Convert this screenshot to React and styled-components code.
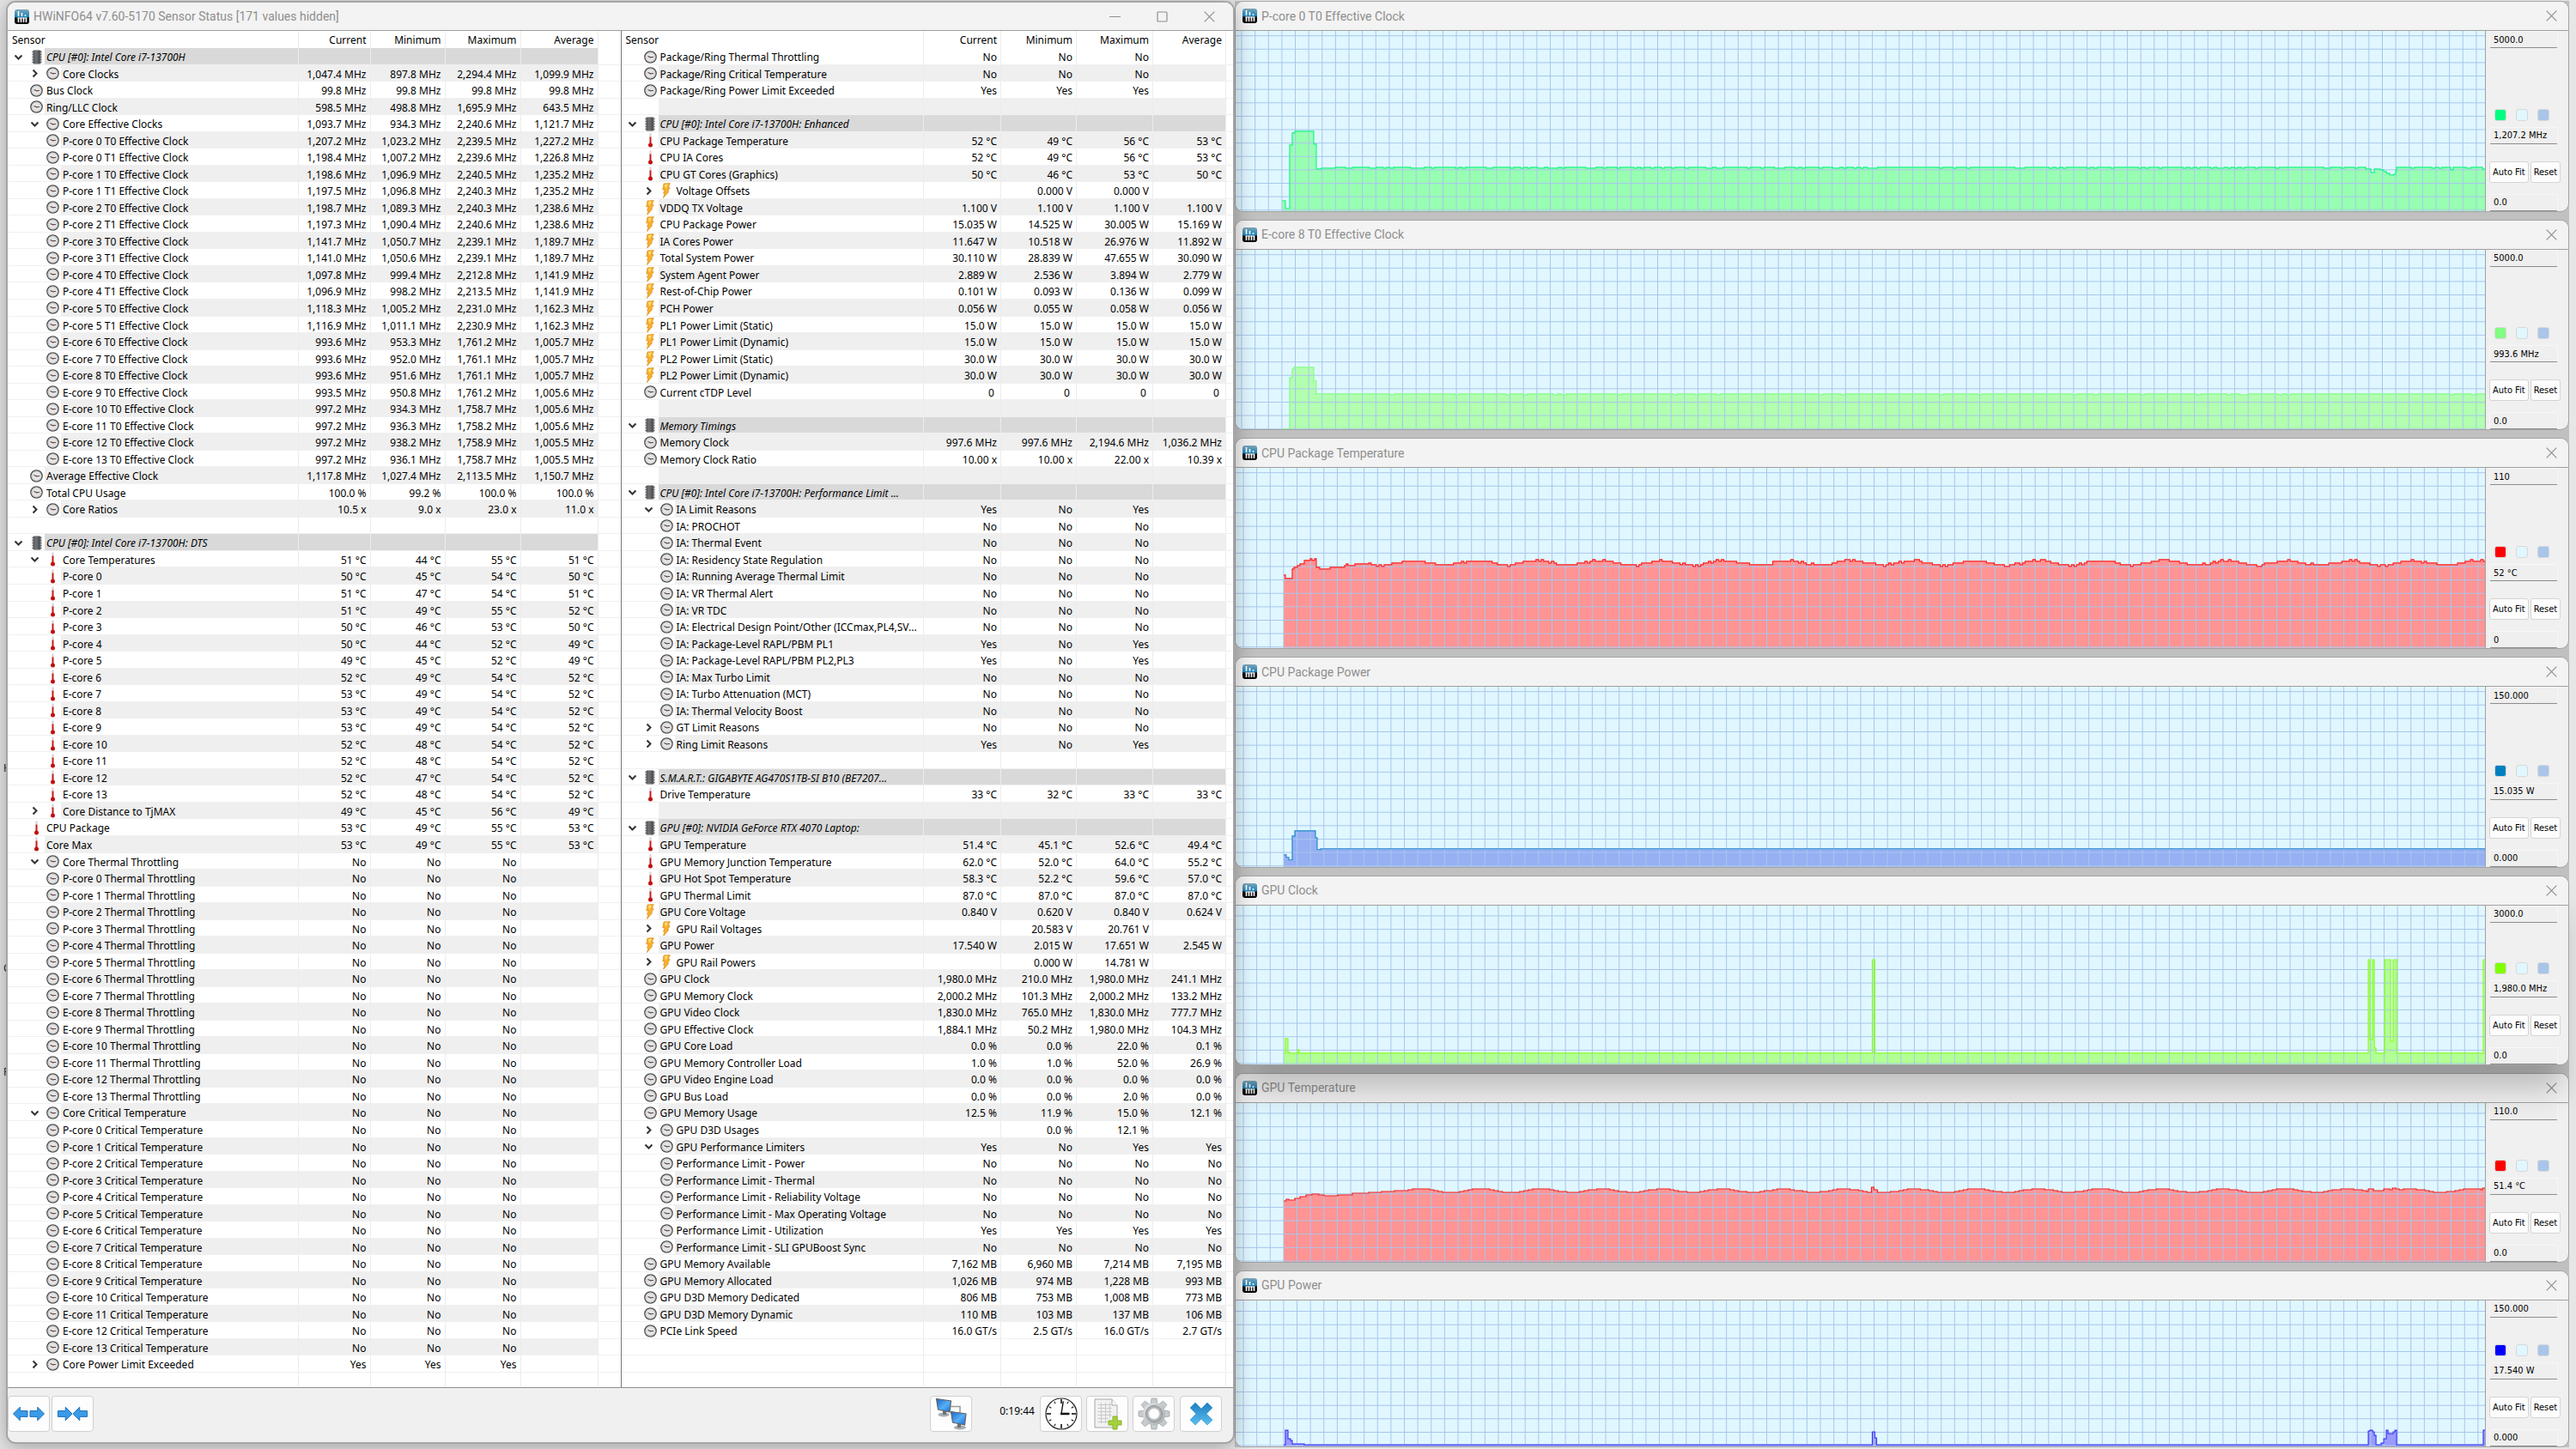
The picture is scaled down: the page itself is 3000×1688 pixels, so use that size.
import styled, { createGlobalStyle, css } from "styled-components";

const GlobalStyle = createGlobalStyle`
  * {
    box-sizing: border-box;
  }
  body {
    margin: 0;
    background: #e6e6e6;
    font-family: "Noto Sans", "Open Sans", sans-serif;
    font-size: 12px;
    color: #000;
  }
  button, input {
    font: inherit;
    color: inherit;
    margin: 0;
  }
`;

const Desktop = styled.div`
  position: relative;
  display: grid;
  grid-template-columns: 1431fr 1554fr;
  height: 100vh;
  min-height: 1500px;
  padding: 1px 8px 2px 7px;
  overflow: hidden;
`;

/* bits of the window that lies behind everything */
const Behind = styled.span`
  position: absolute;
  left: 4px;
  top: ${(p) => p.$top}px;
  line-height: 16px;
  color: #222;
`;

const AppWindow = styled.main`
  position: relative;
  z-index: 2;
  display: flex;
  flex-direction: column;
  min-width: 0;
  margin-bottom: 4px;
  overflow: hidden;
  border: 2px solid #a6a6a6;
  border-radius: 11px;
  background: #f0f0f0;
  box-shadow: 0 4px 24px rgba(0, 0, 0, 0.3);
`;

const TitleBar = styled.header`
  display: flex;
  align-items: center;
  flex: none;
  height: ${(p) => p.$height}px;
  padding-left: 8px;
  background: #f3f3f3;
  border-bottom: 1px solid #a0a0a0;
  svg {
    flex: none;
  }
`;

const Title = styled.h1`
  flex: 1;
  margin: 0 0 0 5px;
  font-family: Roboto, "Open Sans", sans-serif;
  font-size: 14px;
  font-weight: 400;
  line-height: 20px;
  color: #8e8e8e;
  white-space: nowrap;
`;

const WindowButton = styled.button`
  display: flex;
  align-items: center;
  justify-content: center;
  width: ${(p) => (p.$wide ? 55 : 40)}px;
  height: 32px;
  padding: 0;
  border: 0;
  background: none;
  color: #8e8e8e;
`;

const Panes = styled.div`
  display: grid;
  grid-template-columns: 1fr 1fr;
  flex: 1;
  min-height: 0;
  border-bottom: 1px solid #8f8f97;
`;

const SensorTable = styled.table`
  display: flex;
  flex-direction: column;
  min-width: 0;
  background: #fff;
  & + & {
    border-left: 1px solid #777;
  }
  thead {
    flex: none;
  }
  tbody {
    display: flex;
    flex-direction: column;
    flex: 1;
    min-height: 0;
  }
  tr {
    display: grid;
    grid-template-columns: ${(p) => p.$columns};
  }
`;

const HeadRow = styled.tr`
  height: 20px;
  th {
    padding: 0 4px 0 5px;
    border-right: 1px solid #ececec;
    font-weight: 400;
    line-height: 22px;
    text-align: right;
  }
  th:first-child {
    text-align: left;
  }
`;

const tones = { white: "#fff", stripe: "#efefef", group: "#d9d9d9" };

const Row = styled.tr`
  flex: ${(p) => (p.$last ? "0 0 17px" : "1 1 0")};
  min-height: 0;
  overflow: hidden;
  border-bottom: 1px solid ${(p) => (p.$last ? "#fff" : "#f0f0f0")};
  line-height: 21px;
  white-space: nowrap;
  th {
    display: flex;
    min-width: 0;
    padding: 0 0 0 ${(p) => 3 + p.$level * 19}px;
    border-right: 1px solid #ececec;
    font-weight: 400;
    text-align: left;
  }
  td {
    padding: 0 4px 0 5px;
    border-right: 1px solid #ececec;
    background: ${(p) => tones[p.$tone]};
    text-align: right;
  }
`;

const Twisty = styled.button`
  display: flex;
  align-items: center;
  justify-content: center;
  flex: none;
  width: 19px;
  height: 20px;
  margin-right: 2px;
  padding: 0;
  border: 0;
  background: none;
  color: #333;
`;

const NoTwisty = styled.span`
  flex: none;
  width: 21px;
`;

const IconBox = styled.span`
  display: flex;
  align-items: center;
  justify-content: center;
  flex: none;
  width: 19px;
  height: 20px;
`;

const Label = styled.span`
  flex: 1;
  min-width: 0;
  padding-left: 2px;
  overflow: hidden;
  background: ${(p) => tones[p.$tone]};
  ${(p) =>
    p.$tone === "group" &&
    css`
      font-style: italic;
    `}
`;

const Toolbar = styled.footer`
  display: flex;
  align-items: flex-start;
  flex: none;
  height: 63px;
  padding: 9px 13px 0 0;
`;

const ToolButton = styled.button`
  display: flex;
  align-items: center;
  justify-content: center;
  width: 49px;
  height: 42px;
  margin-left: ${(p) => p.$gap || 0}px;
  padding: 0;
  border: 1px solid #d0d0d0;
  border-radius: 4px;
  background: #fdfdfd;
`;

const Elapsed = styled.time`
  padding-left: 32px;
  line-height: 36px;
`;

const Push = styled.div`
  flex: 1;
`;

const Graphs = styled.section`
  display: flex;
  flex-direction: column;
  gap: 9px;
  min-width: 0;
  background: #c0c0c0;
`;

const GraphWindow = styled.article`
  position: relative;
  z-index: ${(p) => (p.$raised ? 1 : 0)};
  display: flex;
  flex-direction: column;
  flex: ${(p) => p.$weight} 1 0;
  min-height: 0;
  border: 1px solid #a3a3a3;
  border-radius: 10px;
  background: #f0f0f0;
  box-shadow: ${(p) => (p.$raised ? "0 38px 36px -8px rgba(0, 0, 0, 0.22)" : "none")};
  header {
    border-radius: 9px 9px 0 0;
  }
`;

const GraphBody = styled.div`
  display: flex;
  flex: 1;
  min-height: 0;
`;

const Plot = styled.div`
  flex: 1;
  min-width: 0;
  overflow: hidden;
  border-right: 1px solid #a0a0a0;
  border-bottom-left-radius: 9px;
  background: #e0f7ff;
  svg {
    display: block;
    width: 100%;
    height: 100%;
  }
`;

const Side = styled.div`
  display: flex;
  flex-direction: column;
  flex: none;
  width: 96px;
  padding-left: 4px;
  font-family: "DejaVu Sans Condensed", "DejaVu Sans", sans-serif;
  font-size: 11px;
`;

const Field = styled.input`
  flex: none;
  width: 80px;
  height: 20px;
  padding: 0 0 0 4px;
  border: 1px solid #f7f7f7;
  border-bottom: 1px solid #8c8c8c;
  border-radius: 2px;
  background: #efefef;
`;

const Swatches = styled.div`
  display: flex;
  gap: 11px;
  margin: auto 0 7px 6px;
`;

const Swatch = styled.button`
  width: 14px;
  height: 14px;
  padding: 0;
  border: 1px solid #d8d8d8;
  border-radius: 3px;
  background: ${(p) => p.$color};
`;

const SideButtons = styled.div`
  display: flex;
  gap: 2px;
  margin: 20px 0 13px;
`;

const SideButton = styled.button`
  height: 25px;
  padding: 0 3px;
  border: 1px solid #d4d4d4;
  border-radius: 3px;
  background: #fdfdfd;
`;

const AppIcon = () => (
  <svg width="17" height="17" viewBox="0 0 17 17" aria-hidden="true">
    <defs>
      <linearGradient id="logoTop" x1="0" y1="0" x2="0" y2="1">
        <stop offset="0" stopColor="#7fa6b8" />
        <stop offset="0.5" stopColor="#1d84ba" />
        <stop offset="0.55" stopColor="#0a3c58" />
        <stop offset="0.6" stopColor="#111" />
        <stop offset="1" stopColor="#000" />
      </linearGradient>
    </defs>
    <rect width="17" height="17" rx="3" fill="url(#logoTop)" />
    <path
      d="M4.500 2v6M8.500 4v4M12.500 6v2M4.500 9.500V15M7.500 9.500V15M10.500 9.500V15M13.500 9.500V15"
      stroke="#fff"
      strokeWidth="1.600"
    />
    <path d="M3.500 10h10.500" stroke="#fff" strokeWidth="1" />
  </svg>
);

const CloseIcon = () => (
  <svg width="13" height="13" viewBox="0 0 13 13" aria-hidden="true">
    <path d="M.7 .7l11.600 11.600M12.300 .7L.7 12.300" stroke="currentColor" strokeWidth="1.200" />
  </svg>
);

const MinimizeIcon = () => (
  <svg width="13" height="13" viewBox="0 0 13 13" aria-hidden="true">
    <path d="M0 6.500h13" stroke="currentColor" />
  </svg>
);

const MaximizeIcon = () => (
  <svg width="13" height="13" viewBox="0 0 13 13" aria-hidden="true">
    <rect x="1" y="1" width="11" height="11" rx="1" fill="none" stroke="currentColor" strokeWidth="1.200" />
  </svg>
);

const Chevron = ({ open }) => (
  <svg width="11" height="11" viewBox="0 0 11 11" fill="none" stroke="currentColor" strokeWidth="2" aria-hidden="true">
    <path d={open ? "M1.500 3.500l4 4 4-4" : "M3.500 1.500l4 4-4 4"} />
  </svg>
);

const sensorIcons = {
  chip: (
    <svg width="14" height="17" viewBox="0 0 14 17" aria-hidden="true">
      <path d="M1 2.500h12M1 5.500h12M1 8.500h12M1 11.500h12M1 14.500h12" stroke="#9a9a9a" strokeWidth="1.500" />
      <rect x="2.500" y=".5" width="9" height="16" rx="1" fill="#55565a" />
      <rect x="4" y="1" width="4" height="15" fill="#6b6c70" />
    </svg>
  ),
  clock: (
    <svg width="15" height="15" viewBox="0 0 15 15" aria-hidden="true">
      <circle cx="7.500" cy="7.500" r="6.700" fill="#e4e4e4" stroke="#4a4a4a" strokeWidth="1.300" />
      <circle cx="7.500" cy="7.500" r="5.400" fill="none" stroke="#bcbcbc" strokeWidth=".8" />
      <path d="M4.500 6.500l3 1.300 3.500-.3" fill="none" stroke="#444" strokeWidth="1.100" />
      <circle cx="7.700" cy="7.800" r=".8" fill="#a33" />
    </svg>
  ),
  temp: (
    <svg width="7" height="17" viewBox="0 0 7 17" aria-hidden="true">
      <rect x="2.300" y=".3" width="2.400" height="13" rx="1.200" fill="#dcd6d6" />
      <rect x="2.600" y="4.500" width="1.800" height="9" fill="#d01515" />
      <circle cx="3.500" cy="14" r="2.500" fill="#c01010" />
    </svg>
  ),
  bolt: (
    <svg width="10" height="18" viewBox="0 0 10 18" aria-hidden="true">
      <path d="M2 1L9.300 .5 7 5.800l2.200-.2L6.300 10.500l1.400-.1L1.500 17.500l1.600-5.600-1.500.2L3.300 7.700.8 8z" fill="#fbb02a" stroke="#d98a1c" strokeWidth=".7" />
      <path d="M3 2l3.800-.3L4.500 7" fill="#ffe27a" />
    </svg>
  ),
};

const Arrow = ({ x, flip }) => (
  <path
    d="M0 9L8 1v4.500h9v7H8V17z"
    transform={flip ? `translate(${x + 17} 0) scale(-1 1)` : `translate(${x} 0)`}
    fill="#3a9be8"
    stroke="#1c6fb8"
  />
);

const ExpandIcon = () => (
  <svg width="37" height="18" viewBox="-.5 0 38 18" aria-hidden="true">
    <Arrow x={0} />
    <Arrow x={20} flip />
  </svg>
);

const CollapseIcon = () => (
  <svg width="35" height="18" viewBox="-.5 0 36 18" aria-hidden="true">
    <Arrow x={0} flip />
    <Arrow x={18} />
  </svg>
);

const NetworkIcon = () => (
  <svg width="38" height="38" viewBox="0 0 38 38" aria-hidden="true">
    <defs>
      <linearGradient id="screen" x1="0" y1="0" x2="1" y2="1">
        <stop offset="0" stopColor="#1a63c4" />
        <stop offset=".55" stopColor="#56b0f8" />
        <stop offset="1" stopColor="#1767cf" />
      </linearGradient>
    </defs>
    <path d="M18 10.500h11V18" fill="none" stroke="#999" strokeWidth="1.500" />
    <ellipse cx="10" cy="20" rx="6.500" ry="2.500" fill="#a9adb0" />
    <path d="M9 14h4v6H9z" fill="#6d7275" />
    <path d="M1.500 1.500l17 2.500-1.500 13-13.500-3z" fill="url(#screen)" stroke="#60666a" strokeWidth="1.200" />
    <ellipse cx="29" cy="35" rx="7" ry="2.500" fill="#a9adb0" />
    <path d="M26 29h4v6h-4z" fill="#6d7275" />
    <path d="M18.500 16.500l17.500 2.500-1.500 13-14-3z" fill="url(#screen)" stroke="#60666a" strokeWidth="1.200" />
  </svg>
);

const ClockFace = () => (
  <svg width="38" height="38" viewBox="0 0 38 38" aria-hidden="true">
    <circle cx="19" cy="19" r="18" fill="#fff" stroke="#222" strokeWidth="1.200" />
    {[...Array(12).keys()].map((i) => (
      <path
        key={i}
        d={i % 3 ? "M19 2.500v3" : "M19 2v5"}
        transform={`rotate(${i * 30} 19 19)`}
        stroke="#111"
        strokeWidth={i % 3 ? 1 : 1.6}
      />
    ))}
    <path d="M19 19l2.300-14.500" stroke="#111" strokeWidth="1.400" />
    <path d="M18 19h10.500" stroke="#111" strokeWidth="2.500" />
  </svg>
);

const LogIcon = () => (
  <svg width="34" height="38" viewBox="0 0 34 38" aria-hidden="true">
    <path d="M2 2h20l6 7v26H2z" fill="#f1f1f1" stroke="#a8a8a8" />
    <path d="M22 2v7h6" fill="#fff" stroke="#a8a8a8" />
    <path d="M5.500 8.500h16M5.500 12.500h16M5.500 16.500h16M5.500 20.500h16M5.500 24.500h12M5.500 28.500h12M9.500 6v24M14.500 6v24M19.500 6v18" stroke="#c9c9c9" fill="none" />
    <path d="M23 22h5v5h5v5h-5v5h-5v-5h-5v-5h5z" fill="#a5d23c" stroke="#86b224" />
  </svg>
);

const GearIcon = () => (
  <svg width="38" height="38" viewBox="0 0 38 38" aria-hidden="true">
    <defs>
      <linearGradient id="steel" x1="0" y1="0" x2="1" y2="1">
        <stop offset="0" stopColor="#e4e7e9" />
        <stop offset="1" stopColor="#a4a9ac" />
      </linearGradient>
    </defs>
    {[...Array(8).keys()].map((i) => (
      <path
        key={i}
        d="M15 8l1-7h6l1 7z"
        transform={`rotate(${i * 45} 19 19)`}
        fill="#c6cbcd"
        stroke="#9a9fa2"
        strokeWidth=".7"
      />
    ))}
    <circle cx="19" cy="19" r="13" fill="url(#steel)" />
    <circle cx="19" cy="19" r="9.500" fill="#aeb3b6" stroke="#8d9194" />
    <circle cx="19" cy="19" r="6.500" fill="#fdfdfd" stroke="#c4c8ca" />
  </svg>
);

const ExitIcon = () => (
  <svg width="28" height="28" viewBox="0 0 28 28" aria-hidden="true">
    <defs>
      <linearGradient id="exit" x1="0" y1="0" x2="0" y2="1">
        <stop offset="0" stopColor="#1d7dbd" />
        <stop offset="1" stopColor="#5cc0f2" />
      </linearGradient>
    </defs>
    <path d="M7 1l7 7 7-7 6 6-7 7 7 7-6 6-7-7-7 7-6-6 7-7-7-7z" fill="url(#exit)" stroke="#2e8fcb" strokeWidth=".6" />
  </svg>
);

// [level, icon, twisty, name, current, minimum, maximum, average]
const group = (name) => [0, "chip", "open", name, "", "", "", "", "group"];
const blank = [0, null, "", "", "", "", "", ""];
const leaf = (icon, name, ...v) => [0, icon, "", name, ...v];
const child = (icon, name, ...v) => [1, icon, "", name, ...v];
const open = (icon, name, ...v) => [1, icon, "open", name, ...v];
const closed = (icon, name, ...v) => [1, icon, "closed", name, ...v];
const unit = (u, values) => values.map((v) => (v === "" ? "" : `${v} ${u}`));
const mhz = (...v) => unit("MHz", v);
const deg = (...v) => unit("°C", v);
const watt = (...v) => unit("W", v);
const volt = (...v) => unit("V", v);
const pct = (...v) => unit("%", v);
const mb = (...v) => unit("MB", v);

const no3 = ["No", "No", "No", ""];
const no4 = ["No", "No", "No", "No"];
const yes3 = ["Yes", "Yes", "Yes", ""];
const cores = [0, 1, 2, 3, 4, 5, 6, 7, 8, 9, 10, 11, 12, 13].map((n) => `${n < 6 ? "P" : "E"}-core ${n}`);

const leftRows = [
  group("CPU [#0]: Intel Core i7-13700H"),
  closed("clock", "Core Clocks", ...mhz("1,047.4", "897.8", "2,294.4", "1,099.9")),
  leaf("clock", "Bus Clock", ...mhz("99.8", "99.8", "99.8", "99.8")),
  leaf("clock", "Ring/LLC Clock", ...mhz("598.5", "498.8", "1,695.9", "643.5")),
  open("clock", "Core Effective Clocks", ...mhz("1,093.7", "934.3", "2,240.6", "1,121.7")),
  child("clock", "P-core 0 T0 Effective Clock", ...mhz("1,207.2", "1,023.2", "2,239.5", "1,227.2")),
  child("clock", "P-core 0 T1 Effective Clock", ...mhz("1,198.4", "1,007.2", "2,239.6", "1,226.8")),
  child("clock", "P-core 1 T0 Effective Clock", ...mhz("1,198.6", "1,096.9", "2,240.5", "1,235.2")),
  child("clock", "P-core 1 T1 Effective Clock", ...mhz("1,197.5", "1,096.8", "2,240.3", "1,235.2")),
  child("clock", "P-core 2 T0 Effective Clock", ...mhz("1,198.7", "1,089.3", "2,240.3", "1,238.6")),
  child("clock", "P-core 2 T1 Effective Clock", ...mhz("1,197.3", "1,090.4", "2,240.6", "1,238.6")),
  child("clock", "P-core 3 T0 Effective Clock", ...mhz("1,141.7", "1,050.7", "2,239.1", "1,189.7")),
  child("clock", "P-core 3 T1 Effective Clock", ...mhz("1,141.0", "1,050.6", "2,239.1", "1,189.7")),
  child("clock", "P-core 4 T0 Effective Clock", ...mhz("1,097.8", "999.4", "2,212.8", "1,141.9")),
  child("clock", "P-core 4 T1 Effective Clock", ...mhz("1,096.9", "998.2", "2,213.5", "1,141.9")),
  child("clock", "P-core 5 T0 Effective Clock", ...mhz("1,118.3", "1,005.2", "2,231.0", "1,162.3")),
  child("clock", "P-core 5 T1 Effective Clock", ...mhz("1,116.9", "1,011.1", "2,230.9", "1,162.3")),
  child("clock", "E-core 6 T0 Effective Clock", ...mhz("993.6", "953.3", "1,761.2", "1,005.7")),
  child("clock", "E-core 7 T0 Effective Clock", ...mhz("993.6", "952.0", "1,761.1", "1,005.7")),
  child("clock", "E-core 8 T0 Effective Clock", ...mhz("993.6", "951.6", "1,761.1", "1,005.7")),
  child("clock", "E-core 9 T0 Effective Clock", ...mhz("993.5", "950.8", "1,761.2", "1,005.6")),
  child("clock", "E-core 10 T0 Effective Clock", ...mhz("997.2", "934.3", "1,758.7", "1,005.6")),
  child("clock", "E-core 11 T0 Effective Clock", ...mhz("997.2", "936.3", "1,758.2", "1,005.6")),
  child("clock", "E-core 12 T0 Effective Clock", ...mhz("997.2", "938.2", "1,758.9", "1,005.5")),
  child("clock", "E-core 13 T0 Effective Clock", ...mhz("997.2", "936.1", "1,758.7", "1,005.5")),
  leaf("clock", "Average Effective Clock", ...mhz("1,117.8", "1,027.4", "2,113.5", "1,150.7")),
  leaf("clock", "Total CPU Usage", ...pct("100.0", "99.2", "100.0", "100.0")),
  closed("clock", "Core Ratios", "10.5 x", "9.0 x", "23.0 x", "11.0 x"),
  blank,
  group("CPU [#0]: Intel Core i7-13700H: DTS"),
  open("temp", "Core Temperatures", ...deg(51, 44, 55, 51)),
  ...[
    [50, 45, 54, 50],
    [51, 47, 54, 51],
    [51, 49, 55, 52],
    [50, 46, 53, 50],
    [50, 44, 52, 49],
    [49, 45, 52, 49],
    [52, 49, 54, 52],
    [53, 49, 54, 52],
    [53, 49, 54, 52],
    [53, 49, 54, 52],
    [52, 48, 54, 52],
    [52, 48, 54, 52],
    [52, 47, 54, 52],
    [52, 48, 54, 52],
  ].map((v, i) => child("temp", cores[i], ...deg(...v))),
  closed("temp", "Core Distance to TjMAX", ...deg(49, 45, 56, 49)),
  leaf("temp", "CPU Package", ...deg(53, 49, 55, 53)),
  leaf("temp", "Core Max", ...deg(53, 49, 55, 53)),
  open("clock", "Core Thermal Throttling", ...no3),
  ...cores.map((c) => child("clock", `${c} Thermal Throttling`, ...no3)),
  open("clock", "Core Critical Temperature", ...no3),
  ...cores.map((c) => child("clock", `${c} Critical Temperature`, ...no3)),
  closed("clock", "Core Power Limit Exceeded", ...yes3),
];

const rightRows = [
  leaf("clock", "Package/Ring Thermal Throttling", ...no3),
  leaf("clock", "Package/Ring Critical Temperature", ...no3),
  leaf("clock", "Package/Ring Power Limit Exceeded", ...yes3),
  blank,
  group("CPU [#0]: Intel Core i7-13700H: Enhanced"),
  leaf("temp", "CPU Package Temperature", ...deg(52, 49, 56, 53)),
  leaf("temp", "CPU IA Cores", ...deg(52, 49, 56, 53)),
  leaf("temp", "CPU GT Cores (Graphics)", ...deg(50, 46, 53, 50)),
  closed("bolt", "Voltage Offsets", ...volt("", "0.000", "0.000", "")),
  leaf("bolt", "VDDQ TX Voltage", ...volt("1.100", "1.100", "1.100", "1.100")),
  leaf("bolt", "CPU Package Power", ...watt("15.035", "14.525", "30.005", "15.169")),
  leaf("bolt", "IA Cores Power", ...watt("11.647", "10.518", "26.976", "11.892")),
  leaf("bolt", "Total System Power", ...watt("30.110", "28.839", "47.655", "30.090")),
  leaf("bolt", "System Agent Power", ...watt("2.889", "2.536", "3.894", "2.779")),
  leaf("bolt", "Rest-of-Chip Power", ...watt("0.101", "0.093", "0.136", "0.099")),
  leaf("bolt", "PCH Power", ...watt("0.056", "0.055", "0.058", "0.056")),
  leaf("bolt", "PL1 Power Limit (Static)", ...watt("15.0", "15.0", "15.0", "15.0")),
  leaf("bolt", "PL1 Power Limit (Dynamic)", ...watt("15.0", "15.0", "15.0", "15.0")),
  leaf("bolt", "PL2 Power Limit (Static)", ...watt("30.0", "30.0", "30.0", "30.0")),
  leaf("bolt", "PL2 Power Limit (Dynamic)", ...watt("30.0", "30.0", "30.0", "30.0")),
  leaf("clock", "Current cTDP Level", "0\u00a0", "0\u00a0", "0\u00a0", "0\u00a0"),
  blank,
  group("Memory Timings"),
  leaf("clock", "Memory Clock", ...mhz("997.6", "997.6", "2,194.6", "1,036.2")),
  leaf("clock", "Memory Clock Ratio", "10.00 x", "10.00 x", "22.00 x", "10.39 x"),
  blank,
  group("CPU [#0]: Intel Core i7-13700H: Performance Limit ..."),
  open("clock", "IA Limit Reasons", "Yes", "No", "Yes", ""),
  child("clock", "IA: PROCHOT", ...no3),
  child("clock", "IA: Thermal Event", ...no3),
  child("clock", "IA: Residency State Regulation", ...no3),
  child("clock", "IA: Running Average Thermal Limit", ...no3),
  child("clock", "IA: VR Thermal Alert", ...no3),
  child("clock", "IA: VR TDC", ...no3),
  child("clock", "IA: Electrical Design Point/Other (ICCmax,PL4,SV...", ...no3),
  child("clock", "IA: Package-Level RAPL/PBM PL1", "Yes", "No", "Yes", ""),
  child("clock", "IA: Package-Level RAPL/PBM PL2,PL3", "Yes", "No", "Yes", ""),
  child("clock", "IA: Max Turbo Limit", ...no3),
  child("clock", "IA: Turbo Attenuation (MCT)", ...no3),
  child("clock", "IA: Thermal Velocity Boost", ...no3),
  closed("clock", "GT Limit Reasons", ...no3),
  closed("clock", "Ring Limit Reasons", "Yes", "No", "Yes", ""),
  blank,
  group("S.M.A.R.T.: GIGABYTE AG470S1TB-SI B10 (BE7207..."),
  leaf("temp", "Drive Temperature", ...deg(33, 32, 33, 33)),
  blank,
  group("GPU [#0]: NVIDIA GeForce RTX 4070 Laptop:"),
  leaf("temp", "GPU Temperature", ...deg("51.4", "45.1", "52.6", "49.4")),
  leaf("temp", "GPU Memory Junction Temperature", ...deg("62.0", "52.0", "64.0", "55.2")),
  leaf("temp", "GPU Hot Spot Temperature", ...deg("58.3", "52.2", "59.6", "57.0")),
  leaf("temp", "GPU Thermal Limit", ...deg("87.0", "87.0", "87.0", "87.0")),
  leaf("bolt", "GPU Core Voltage", ...volt("0.840", "0.620", "0.840", "0.624")),
  closed("bolt", "GPU Rail Voltages", ...volt("", "20.583", "20.761", "")),
  leaf("bolt", "GPU Power", ...watt("17.540", "2.015", "17.651", "2.545")),
  closed("bolt", "GPU Rail Powers", ...watt("", "0.000", "14.781", "")),
  leaf("clock", "GPU Clock", ...mhz("1,980.0", "210.0", "1,980.0", "241.1")),
  leaf("clock", "GPU Memory Clock", ...mhz("2,000.2", "101.3", "2,000.2", "133.2")),
  leaf("clock", "GPU Video Clock", ...mhz("1,830.0", "765.0", "1,830.0", "777.7")),
  leaf("clock", "GPU Effective Clock", ...mhz("1,884.1", "50.2", "1,980.0", "104.3")),
  leaf("clock", "GPU Core Load", ...pct("0.0", "0.0", "22.0", "0.1")),
  leaf("clock", "GPU Memory Controller Load", ...pct("1.0", "1.0", "52.0", "26.9")),
  leaf("clock", "GPU Video Engine Load", ...pct("0.0", "0.0", "0.0", "0.0")),
  leaf("clock", "GPU Bus Load", ...pct("0.0", "0.0", "2.0", "0.0")),
  leaf("clock", "GPU Memory Usage", ...pct("12.5", "11.9", "15.0", "12.1")),
  closed("clock", "GPU D3D Usages", ...pct("", "0.0", "12.1", "")),
  open("clock", "GPU Performance Limiters", "Yes", "No", "Yes", "Yes"),
  child("clock", "Performance Limit - Power", ...no4),
  child("clock", "Performance Limit - Thermal", ...no4),
  child("clock", "Performance Limit - Reliability Voltage", ...no4),
  child("clock", "Performance Limit - Max Operating Voltage", ...no4),
  child("clock", "Performance Limit - Utilization", "Yes", "Yes", "Yes", "Yes"),
  child("clock", "Performance Limit - SLI GPUBoost Sync", ...no4),
  leaf("clock", "GPU Memory Available", ...mb("7,162", "6,960", "7,214", "7,195")),
  leaf("clock", "GPU Memory Allocated", ...mb("1,026", "974", "1,228", "993")),
  leaf("clock", "GPU D3D Memory Dedicated", ...mb("806", "753", "1,008", "773")),
  leaf("clock", "GPU D3D Memory Dynamic", ...mb("110", "103", "137", "106")),
  leaf("clock", "PCIe Link Speed", "16.0 GT/s", "2.5 GT/s", "16.0 GT/s", "2.7 GT/s"),
];

const ROWS = 80;

const Sensors = ({ rows, columns }) => {
  const padded = [...rows, ...Array(ROWS - rows.length).fill(null)];
  return (
    <SensorTable $columns={columns}>
      <thead>
        <HeadRow>
          <th scope="col">Sensor</th>
          <th scope="col">Current</th>
          <th scope="col">Minimum</th>
          <th scope="col">Maximum</th>
          <th scope="col">Average</th>
        </HeadRow>
      </thead>
      <tbody>
        {padded.map((row, i) => {
          const [level, icon, twisty, name, cur, min, max, avg, kind] = row || blank;
          const tone = kind || (row && i % 2 ? "stripe" : "white");
          return (
            <Row key={i} $level={level} $tone={tone} $last={i === ROWS - 1}>
              <th scope="row">
                {twisty ? (
                  <Twisty aria-expanded={twisty === "open"} aria-label={name}>
                    <Chevron open={twisty === "open"} />
                  </Twisty>
                ) : (
                  <NoTwisty />
                )}
                <IconBox>{sensorIcons[icon]}</IconBox>
                <Label $tone={tone}>{name}</Label>
              </th>
              <td>{cur}</td>
              <td>{min}</td>
              <td>{max}</td>
              <td>{avg}</td>
            </Row>
          );
        })}
      </tbody>
    </SensorTable>
  );
};

const PLOT_W = 1456;
const GRID = 15.64;

const noise = (n) => {
  const v = Math.sin(n * 12.9898) * 43758.5453;
  return v - Math.floor(v);
};

// samples every few pixels between two x positions
const sample = (from, to, step, fn) => {
  const out = [];
  for (let x = from; x < to; x += step) out.push([x, fn(x)]);
  return out;
};

const wave = (x, peak, period) => Math.cos(((x - peak) / period) * Math.PI * 2);

const pcore = [
  [54, 11], [58, 2], [63, 76], [66, 90], [69, 92], [91, 77], [94, 48], [100, 49],
  ...sample(116, 1317, 4, (x) => (noise(x) > 0.75 ? 49 : 50)),
  [1317, 48], [1323, 44], [1327, 48], [1334, 47], [1338, 45], [1341, 43], [1345, 41], [1350, 42], [1352, 46], [1353, 50],
  ...sample(1354, 1416, 4, (x) => (noise(x) > 0.75 ? 49 : 50)),
  [1416, 47], [1419, 50], [1434, 49], [1440, 50], [1453, 48],
];

const ecore = [
  [54, 0], [63, 60], [66, 70], [68, 72], [91, 56], [94, 41],
  ...sample(100, 1456, 5, (x) => (noise(x) > 0.92 ? 40 : 41)),
];

const cpuTemp = [
  [56, 84], [58, 80], [66, 91], [68, 93], [72, 95], [75, 97], [80, 101], [87, 103], [89, 101], [92, 103], [94, 93], [98, 91],
  [110, 93], [127, 95], [129, 97], [131, 95], [139, 97],
  ...sample(155, 1456, 3, (x) => 98 + Math.round(wave(x, 204, 73) * 1.3 + noise(x) * 1.1 - 0.5) * 2),
];

const cpuPower = [
  [56, 13], [59, 10], [62, 7], [66, 35], [69, 41], [93, 33], [95, 19], [99, 20], [1456, 20],
];

const gpuClock = [
  [56, 12], [58, 29], [61, 13], [63, 12], [72, 16], [74, 12],
  [742, 121], [745, 12],
  [1320, 121], [1322, 28], [1325, 121], [1327, 18], [1329, 12],
  [1339, 121], [1346, 26], [1349, 121], [1353, 12], [1454, 121],
];

const gpuTemp = [
  [56, 70], [59, 72], [62, 71], [69, 73], [75, 75], [82, 77], [89, 78], [97, 77], [103, 76], [119, 77], [136, 79], [155, 80], [170, 81], [185, 82],
  ...sample(196, 741, 5, (x) => 82 + Math.round(wave(x, 213, 70.5) * 2)),
  [741, 86], [744, 83],
  ...sample(748, 1320, 5, (x) => 82 + Math.round(wave(x, 213, 72) * 2)),
  [1320, 84], [1326, 82], [1338, 84], [1345, 83], [1348, 85], [1352, 84],
  ...sample(1356, 1453, 5, (x) => 82 + Math.round(wave(x, 1367, 71) * 2)),
  [1453, 85],
];

const gpuPower = [
  [56, 1], [58, 18], [61, 8], [64, 6], [66, 2], [80, 1],
  [742, 16], [745, 9], [747, 1],
  [1320, 17], [1322, 18], [1325, 16], [1327, 12], [1329, 1], [1335, 3], [1338, 8], [1341, 18], [1343, 14], [1349, 16], [1351, 18], [1353, 1],
  [1454, 18],
];

const Graph = ({ data, line, fill, depth, shift }) => {
  const stairs = data.map(([x, h], i) => {
    const y = depth - 1 - h;
    const next = data[i + 1] ? data[i + 1][0] : PLOT_W;
    return `${x} ${y} ${Math.max(next, x)} ${y}`;
  }).join(" ");
  const start = data[0][0];
  const columns = sample(shift, PLOT_W, GRID, () => 0).map(([x]) => `M${x.toFixed(2)} 0V${depth}`);
  const rows = sample(1, depth, GRID, () => 0).map(([y]) => `M0 ${(depth - y).toFixed(2)}H${PLOT_W}`);
  return (
    <svg viewBox={`0 0 ${PLOT_W} ${depth}`} preserveAspectRatio="none" aria-hidden="true">
      <polygon points={`${start} ${depth} ${stairs} ${PLOT_W} ${depth}`} fill={fill} />
      <path d={[...columns, ...rows].join("")} stroke="#a9c6ec" strokeWidth="1" />
      <polyline points={stairs} fill="none" stroke={line} strokeWidth="1.200" />
    </svg>
  );
};

const graphs = [
  { id: "p0", title: "P-core 0 T0 Effective Clock", weight: 246, max: "5000.0", min: "0.0", value: "1,207.2 MHz", color: "#00ff80", line: "#19f58a", fill: "#98ffb2", data: pcore, shift: 7 },
  { id: "e8", title: "E-core 8 T0 Effective Clock", weight: 246, max: "5000.0", min: "0.0", value: "993.6 MHz", color: "#80ff80", line: "#86fb8c", fill: "#b2ffb0", data: ecore, shift: 7 },
  { id: "ct", title: "CPU Package Temperature", weight: 246, max: "110", min: "0", value: "52 °C", color: "#ff0000", line: "#ff2222", fill: "#ff9494", data: cpuTemp, shift: 9 },
  { id: "cp", title: "CPU Package Power", weight: 246, max: "150.000", min: "0.000", value: "15.035 W", color: "#0080c0", line: "#2288cc", fill: "#96b0f3", data: cpuPower, shift: 9 },
  { id: "gc", title: "GPU Clock", weight: 221, max: "3000.0", min: "0.0", value: "1,980.0 MHz", color: "#80ff00", line: "#88ff22", fill: "#b2ff94", data: gpuClock, shift: 9, raised: true },
  { id: "gt", title: "GPU Temperature", weight: 221, max: "110.0", min: "0.0", value: "51.4 °C", color: "#ff0000", line: "#ee2222", fill: "#ff9494", data: gpuTemp, shift: 9 },
  { id: "gp", title: "GPU Power", weight: 206, max: "150.000", min: "0.000", value: "17.540 W", color: "#0000ff", line: "#3c3cf5", fill: "#9a9aff", data: gpuPower, shift: 9 },
];

const GraphPanel = ({ graph }) => (
  <GraphWindow $weight={graph.weight} $raised={graph.raised}>
    <TitleBar $height={34}>
      <AppIcon />
      <Title as="h2">{graph.title}</Title>
      <WindowButton aria-label="Close">
        <CloseIcon />
      </WindowButton>
    </TitleBar>
    <GraphBody>
      <Plot>
        <Graph {...graph} depth={graph.weight - 36} />
      </Plot>
      <Side>
        <Field aria-label="Upper bound" defaultValue={graph.max} />
        <Swatches>
          <Swatch $color={graph.color} aria-label="Line colour" />
          <Swatch $color="#e0f7ff" aria-label="Background colour" />
          <Swatch $color="#a9c5ea" aria-label="Grid colour" />
        </Swatches>
        <Field aria-label="Current value" readOnly value={graph.value} />
        <SideButtons>
          <SideButton>Auto Fit</SideButton>
          <SideButton>Reset</SideButton>
        </SideButtons>
        <Field aria-label="Lower bound" defaultValue={graph.min} />
      </Side>
    </GraphBody>
  </GraphWindow>
);

const App = () => {
  return (
    <Desktop>
      <GlobalStyle />
      <Behind $top={887}>H</Behind>
      <Behind $top={1120}>C</Behind>
      <Behind $top={1241}>P</Behind>
      <AppWindow>
        <TitleBar $height={33}>
          <AppIcon />
          <Title>HWiNFO64 v7.60-5170 Sensor Status [171 values hidden]</Title>
          <WindowButton $wide aria-label="Minimize">
            <MinimizeIcon />
          </WindowButton>
          <WindowButton $wide aria-label="Maximize">
            <MaximizeIcon />
          </WindowButton>
          <WindowButton $wide aria-label="Close">
            <CloseIcon />
          </WindowButton>
        </TitleBar>
        <Panes>
          <Sensors rows={leftRows} columns="1fr 84px 87px 88px 90px 26px" />
          <Sensors rows={rightRows} columns="1fr 90px 88px 89px 85px 8px" />
        </Panes>
        <Toolbar>
          <ToolButton aria-label="Expand columns">
            <ExpandIcon />
          </ToolButton>
          <ToolButton $gap={2} aria-label="Shrink columns">
            <CollapseIcon />
          </ToolButton>
          <Push />
          <ToolButton aria-label="Network">
            <NetworkIcon />
          </ToolButton>
          <Elapsed>0:19:44</Elapsed>
          <ToolButton $gap={6} aria-label="Reset timer">
            <ClockFace />
          </ToolButton>
          <ToolButton $gap={5} aria-label="Start logging">
            <LogIcon />
          </ToolButton>
          <ToolButton $gap={5} aria-label="Settings">
            <GearIcon />
          </ToolButton>
          <ToolButton $gap={6} aria-label="Exit">
            <ExitIcon />
          </ToolButton>
        </Toolbar>
      </AppWindow>
      <Graphs>
        {graphs.map((g) => (
          <GraphPanel key={g.id} graph={g} />
        ))}
      </Graphs>
    </Desktop>
  );
};

export default App;
